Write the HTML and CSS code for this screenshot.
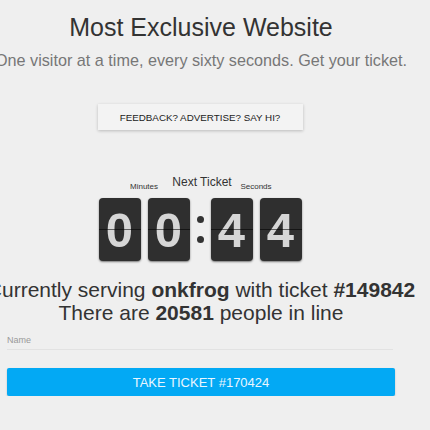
FILE: index.html
```html
<!DOCTYPE html>
<html>
<head>
<meta charset="utf-8">
<link rel="stylesheet" href="styles.css">
</head>
<body>
<div class="page">
  <h1 class="title">Most Exclusive Website</h1>
  <p class="subtitle">One visitor at a time, every sixty seconds. Get your ticket.</p>
  <div class="feedback-row"><div class="feedback">FEEDBACK? ADVERTISE? SAY HI?</div></div>
  <div class="timer">
    <div class="timer-title">Next Ticket</div>
    <div class="clock">
      <div class="group">
        <div class="group-label">Minutes</div>
        <div class="cards">
          <div class="card"><span>0</span></div>
          <div class="card"><span>0</span></div>
        </div>
      </div>
      <div class="colon"><i></i><i></i></div>
      <div class="group">
        <div class="group-label">Seconds</div>
        <div class="cards">
          <div class="card"><span>4</span></div>
          <div class="card"><span>4</span></div>
        </div>
      </div>
    </div>
  </div>
  <div class="status">
    <div class="line">Currently serving&nbsp;<b>onkfrog</b>&nbsp;with ticket&nbsp;<b>#149842</b></div>
    <div class="line">There are&nbsp;<b>20581</b>&nbsp;people in line</div>
  </div>
  <div class="field">
    <label class="field-label">Name</label>
    <div class="field-line"></div>
  </div>
  <button class="take">TAKE TICKET #170424</button>
</div>
</body>
</html>
```
FILE: styles.css
```css
html, body {
  margin: 0;
  padding: 0;
  background: #efefef;
  overflow: hidden;
}
body {
  font-family: "Liberation Sans", Arial, sans-serif;
  color: #333;
}
.page {
  width: 388px;
  margin-left: 7px;
  display: flex;
  flex-direction: column;
}
.title {
  margin: 13px 0 0;
  font-size: 25px;
  font-weight: normal;
  color: #333;
  line-height: 29px;
  display: flex;
  justify-content: center;
  white-space: nowrap;
}
.subtitle {
  margin: 9px 0 0;
  font-size: 16.2px;
  line-height: 19px;
  color: #777;
  display: flex;
  justify-content: center;
  white-space: nowrap;
}
.feedback-row {
  display: flex;
  justify-content: center;
  margin-top: 34px;
}
.feedback {
  width: 205px;
  height: 26px;
  background: #f3f3f3;
  box-shadow: 0 1px 3px rgba(0,0,0,0.22);
  font-size: 9.8px;
  color: #222;
  display: flex;
  align-items: center;
  justify-content: center;
  margin-left: -2px;
}
.timer {
  margin-top: 45px;
  display: flex;
  flex-direction: column;
  align-items: center;
}
.timer-title {
  font-size: 12px;
  line-height: 14px;
  color: #333;
  margin-left: 2px;
}
.clock {
  display: flex;
  align-items: flex-end;
  margin-top: -7px;
  margin-left: -2px;
}
.group {
  display: flex;
  flex-direction: column;
  align-items: center;
}
.group-label {
  font-size: 8px;
  line-height: 9px;
  color: #333;
  margin-bottom: 7px;
}
.cards {
  display: flex;
  gap: 7px;
}
.card {
  position: relative;
  width: 42px;
  height: 63px;
  border-radius: 4px;
  background: #2f2f2f;
  box-shadow: 0 1px 2px rgba(0,0,0,0.5);
  display: flex;
  align-items: center;
  justify-content: center;
  overflow: hidden;
}
.card::after {
  content: "";
  position: absolute;
  left: 0;
  right: 0;
  top: 31px;
  height: 1px;
  background: rgba(0,0,0,0.55);
}
.card span {
  font-size: 49px;
  font-weight: bold;
  color: #d6d6d6;
  line-height: 1;
  margin-top: 1px;
}
.colon {
  width: 21px;
  height: 63px;
  display: flex;
  flex-direction: column;
  align-items: center;
  justify-content: center;
  gap: 13px;
}
.colon i {
  width: 7px;
  height: 7px;
  border-radius: 50%;
  background: #333;
}
.status {
  margin-top: 17px;
  display: flex;
  flex-direction: column;
  align-items: center;
  font-size: 21px;
  line-height: 23px;
  color: #333;
}
.line {
  display: flex;
  justify-content: center;
  white-space: nowrap;
  width: 388px;
}
.line b {
  font-weight: bold;
  color: #333;
}
.field {
  margin-top: 11px;
  display: flex;
  flex-direction: column;
}
.field-label {
  font-size: 9px;
  line-height: 11px;
  color: #999;
}
.field-line {
  margin-top: 3px;
  height: 1px;
  width: 386px;
  background: #e2e2e2;
}
.take {
  margin-top: 18px;
  width: 388px;
  height: 28px;
  border: none;
  border-radius: 2px;
  background: #03a9f4;
  box-shadow: 0 1px 2px rgba(0,0,0,0.2);
  color: #eaf6ff;
  font-family: "Liberation Sans", Arial, sans-serif;
  font-size: 13px;
  padding: 0;
}
```
